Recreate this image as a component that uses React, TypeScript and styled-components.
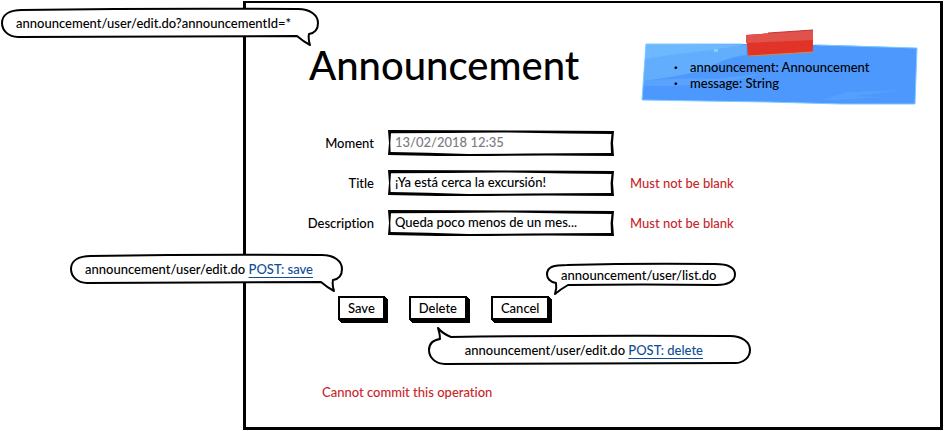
import React from 'react';
import styled, { createGlobalStyle, css } from 'styled-components';

const GlobalStyle = createGlobalStyle`
  *, *::before, *::after { box-sizing: border-box; }
  body { margin: 0; background: #fff; color: #000; font-variant-ligatures: none; }
  body, button, input { font: 500 13px/16px Lato, "Open Sans", sans-serif; font-variant-ligatures: none; }
`;

const Page = styled.div`
  position: relative;
  min-height: 100vh;
  padding: 1px 1px 1px 243px;
  display: flex;
`;

const Sheet = styled.main`
  flex: 1;
  min-width: 0;
  border: 3px solid #000;
  border-top-width: 2px;
  padding: 40px 23px 24px 60px;
`;

const Header = styled.header`
  display: flex;
  align-items: flex-start;
  justify-content: space-between;
  gap: 24px;
`;

const Title = styled.h1`
  margin: 0;
  padding-left: 3px;
  font-size: 40px;
  line-height: 44px;
  font-weight: 500;
`;

const Note = styled.aside`
  position: relative;
  width: 275px;
  padding: 16px 0 15px 32px;
`;

const NoteDrawing = styled.svg`
  position: absolute;
  left: 0;
  top: 0;
  width: 275px;
  height: 63px;
  overflow: visible;
`;

const NoteList = styled.ul`
  position: relative;
  margin: 0;
  padding: 0;
  list-style: none;
`;

const NoteItem = styled.li`
  display: flex;
  gap: 13px;
  &::before { content: "·"; width: 3px; font-weight: 900; }
`;

const Form = styled.form`
  margin: 0;
`;

const Fields = styled.div`
  display: grid;
  grid-template-columns: 68px 226px auto;
  column-gap: 14px;
  row-gap: 14px;
  align-items: center;
  padding-top: 24px;
`;

const Label = styled.label`
  text-align: right;
  white-space: nowrap;
`;

const InputBox = styled.div`
  position: relative;
  height: 26px;
`;

const InputFrame = styled.svg`
  position: absolute;
  inset: 0;
  width: 100%;
  height: 100%;
  pointer-events: none;
`;

const Input = styled.input`
  width: 100%;
  height: 24px;
  border: 0;
  outline: 0;
  padding: 0 8px 0 7px;
  background: transparent;
  color: #000;
  &:disabled { color: #7c7b84; }
`;

const errorText = css`
  color: #c8252a;
  margin: 0;
`;

const FieldError = styled.span`
  ${errorText}
  padding-left: 2px;
`;

const Actions = styled.div`
  display: flex;
  gap: 24px;
  padding: 60px 0 0 32px;
`;

const ActionSlot = styled.div`
  position: relative;
`;

const Button = styled.button`
  height: 24px;
  padding: 0 8px;
  border: 2px solid #000;
  background: #fff;
  color: #000;
  box-shadow: 1px 1px #000, 2px 2px #000, 3px 3px #000;
  line-height: 20px;
`;

const FormError = styled.p`
  ${errorText}
  padding: 64px 0 0 16px;
`;

type Place = { $left: number; $top: number; $width: number; $height: number; $pad: number };

const Bubble = styled.div<Place>`
  position: absolute;
  z-index: 1;
  left: ${p => p.$left}px;
  top: ${p => p.$top}px;
  width: ${p => p.$width}px;
  height: ${p => p.$height}px;
  padding-left: ${p => p.$pad}px;
  display: flex;
  align-items: center;
  white-space: pre;
`;

const BubbleShape = styled.svg`
  position: absolute;
  left: 0;
  top: 0;
  width: 100%;
  height: 100%;
  overflow: visible;
`;

const BubbleText = styled.span`
  position: relative;
`;

const Link = styled.a`
  color: #114d94;
  text-decoration: underline;
  text-underline-offset: 3px;
  text-decoration-thickness: 1px;
  text-decoration-skip-ink: none;
`;

type Tail = 'bottom-right' | 'bottom-left' | 'top-left';

function bubblePath(w: number, h: number, tail: Tail) {
  const r = h / 2;
  const m = w / 2;
  const top = `Q${m} -1 ${w - 20} 0`;
  const rightSide = `C${w - 8} 0 ${w} ${r - 8} ${w} ${r}`;
  const leftSide = `C0 ${r - 8} 7 1 20 1`;
  if (tail === 'bottom-right') {
    return `M20 1${top}${rightSide}C${w} ${h - 8} ${w - 3} ${h - 4} ${w - 9} ${h - 3}Q${w - 10} ${h + 2} ${w - 8} ${h + 8}Q${w - 14} ${h + 5} ${w - 21} ${h - 1}Q${m} ${h - 1} 16 ${h}C6 ${h} 0 ${h - 7} 0 ${r}${leftSide}Z`;
  }
  if (tail === 'bottom-left') {
    return `M20 1${top}${rightSide}C${w} ${r + 7} ${w - 8} ${h} ${w - 18} ${h}Q${m} ${h - 1} 21 ${h}Q14 ${h + 4} 8 ${h + 9}Q10 ${h + 3} 9 ${h - 2}C3 ${h - 3} 0 ${h - 7} 0 ${r}${leftSide}Z`;
  }
  return `M22 1${top}${rightSide}C${w} ${h - 7} ${w - 6} ${h - 1} ${w - 15} ${h - 1}Q${m} ${h} 16 ${h}C6 ${h} 0 ${h - 7} 0 ${r}C0 7 4 4 11 3Q11 -2 9 -8Q14 -2 22 1Z`;
}

interface CalloutProps {
  left: number; top: number; width: number; height: number; pad: number;
  tail: Tail;
  children: React.ReactNode;
}

function Callout({ left, top, width, height, pad, tail, children }: CalloutProps) {
  return (
    <Bubble $left={left} $top={top} $width={width} $height={height} $pad={pad}>
      <BubbleShape aria-hidden="true">
        <path d={bubblePath(width, height, tail)} fill="#fff" stroke="#000" strokeWidth="2" strokeLinejoin="round" />
      </BubbleShape>
      <BubbleText>{children}</BubbleText>
    </Bubble>
  );
}

interface FieldProps { id: string; label: string; value: string; disabled?: boolean; error?: string }

function Field({ id, label, value, disabled, error }: FieldProps) {
  return (
    <>
      <Label htmlFor={id}>{label}</Label>
      <InputBox>
        <InputFrame viewBox="0 0 226 26" preserveAspectRatio="none" aria-hidden="true">
          <path
            fillRule="evenodd"
            d="M0 0L70 .3L140 .6L226 1L225 13L226 26L160 25.4L100 26L50 26L0 25L1 13ZM3 3.2L2.3 13L2.6 22L40 22.8L80 24L140 23.6L223 23L222.6 13L223.5 4L180 3.4L110 2.4L60 3Z"
          />
        </InputFrame>
        <Input id={id} defaultValue={value} disabled={disabled} aria-invalid={!!error} />
      </InputBox>
      {error ? <FieldError>{error}</FieldError> : <span />}
    </>
  );
}

export default function App() {
  return (
    <Page>
      <GlobalStyle />
      <Sheet>
        <Header>
          <Title>Announcement</Title>
          <Note>
            <NoteDrawing viewBox="0 0 275 63" aria-hidden="true">
              <path d="M4 1L60 1L110 1L190 2L275 5L273 61L200 61L125 59L60 58L0 57Z" fill="#4d98fc" />
              <path d="M4 1L105 2L104 12Q80 15 66 26Q40 33 2 38Z" fill="#63adfd" />
              <path d="M4 1L100 2L70 7L28 12L3 16Z" fill="#6db8fe" />
              <path d="M2 38Q45 34 70 36L120 31L75 41L30 43L1 43Z" fill="#59a3fe" />
              <path d="M180 57L205 49L260 47L215 53L240 54L200 57Z" fill="#559ffe" />
              <path d="M72 6h4v3h-4z" fill="#88ccff" />
              <path d="M4 1L100 1M175 2L275 5L273 61L200 61L125 59L60 58L0 57L4 1" fill="none" stroke="#7accff" strokeWidth="1" />
              <path d="M104 -8L171 -13L171 9L106 13Z" fill="#e23328" />
              <path d="M104 -8L171 -13L171 -3L104 0Z" fill="#e0524b" />
              <path d="M106 13L171 9" stroke="#d98a3a" strokeWidth="1" />
              <path d="M126 -10L171 -13" stroke="#b93a36" strokeWidth="1" />
            </NoteDrawing>
            <NoteList>
              <NoteItem>announcement: Announcement</NoteItem>
              <NoteItem>message: String</NoteItem>
            </NoteList>
          </Note>
        </Header>

        <Form onSubmit={e => e.preventDefault()}>
          <Fields>
            <Field id="moment" label="Moment" value="13/02/2018 12:35" disabled />
            <Field id="title" label="Title" value="¡Ya está cerca la excursión!" error="Must not be blank" />
            <Field id="description" label="Description" value="Queda poco menos de un mes..." error="Must not be blank" />
          </Fields>
          <Actions>
            <ActionSlot>
              <Button type="submit">Save</Button>
              <Callout left={-267} top={-41} width={271} height={28} pad={14} tail="bottom-right">
                announcement/user/edit.do <Link href="#save">POST: save</Link>
              </Callout>
            </ActionSlot>
            <ActionSlot>
              <Button type="button">Delete</Button>
              <Callout left={20} top={40} width={321} height={28} pad={36} tail="top-left">
                announcement/user/edit.do <Link href="#delete">POST: delete</Link>
              </Callout>
            </ActionSlot>
            <ActionSlot>
              <Button type="button">Cancel</Button>
              <Callout left={56} top={-32} width={188} height={21} pad={14} tail="bottom-left">
                announcement/user/list.do
              </Callout>
            </ActionSlot>
          </Actions>
          <FormError role="alert">Cannot commit this operation</FormError>
        </Form>
      </Sheet>
      <Callout left={2} top={9} width={316} height={28} pad={14} tail="bottom-right">
        announcement/user/edit.do?announcementId=*
      </Callout>
    </Page>
  );
}
